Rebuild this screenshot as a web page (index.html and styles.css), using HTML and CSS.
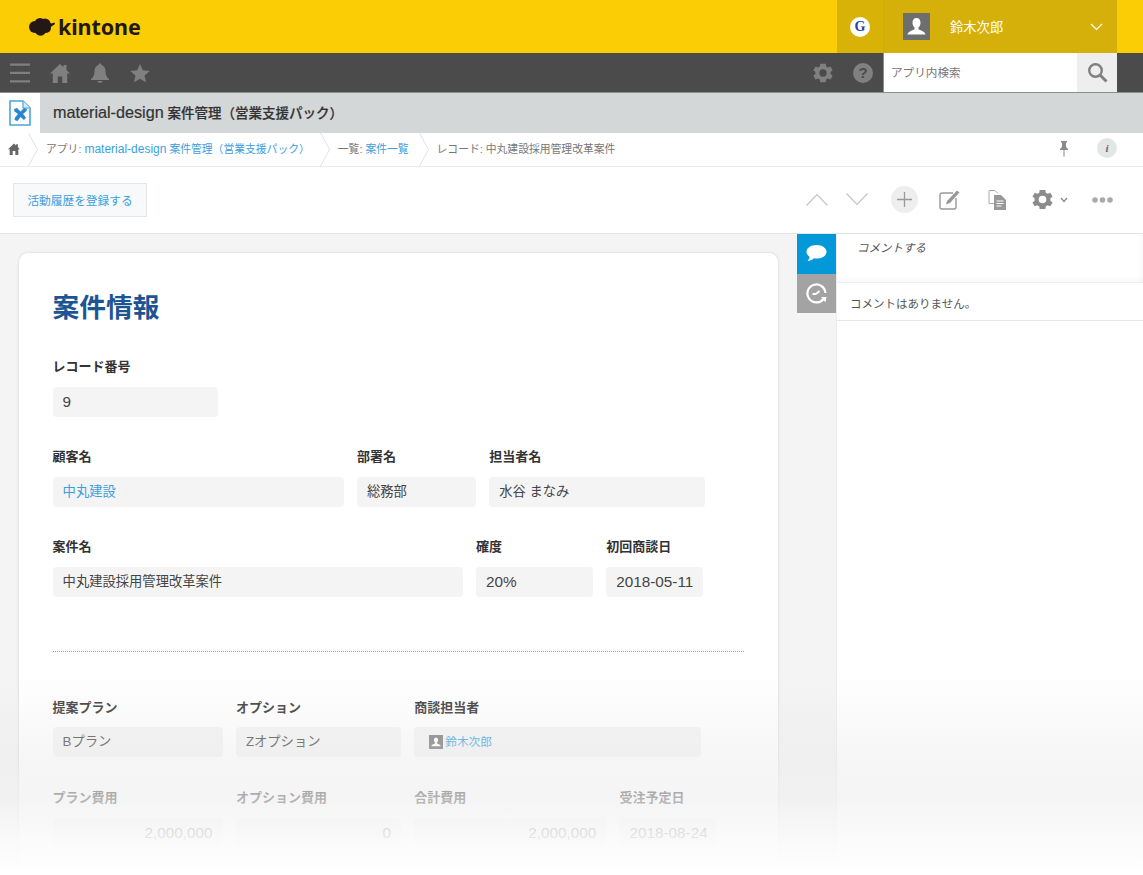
FILE: index.html
```html
<!DOCTYPE html>
<html lang="ja">
<head>
<meta charset="utf-8">
<title>kintone</title>
<link rel="stylesheet" href="styles.css">
</head>
<body>
<div class="page">
<header class="topbar">
  <div class="logo">
    <svg class="logo-mark" width="26" height="19" viewBox="0 0 26 19"><g fill="#231815"><circle cx="6" cy="10" r="6"/><circle cx="11" cy="6.500" r="5.500"/><circle cx="16" cy="7" r="5.500"/><circle cx="11.500" cy="13" r="5.800"/><circle cx="17" cy="11" r="5"/><path d="M19 5l3.500 1.500 3-1L26 7l-3.500 2.500-3 .5z"/></g></svg>
    <span class="logo-text">kintone</span>
  </div>
  <div class="top-right">
    <div class="guest"><span class="g-circle">G</span></div>
    <div class="user">
      <span class="avatar"><svg width="27" height="27" viewBox="0 0 27 27"><rect width="27" height="27" fill="#6e6e6e"/><path d="M13.500 5C16 5 17.500 7 17.500 9.800 17.500 12 16.500 13.600 15.500 14.600V16C15.500 17 22 18 22.500 21.500H4.500C5 18 11.500 17 11.500 16V14.600C10.500 13.600 9.500 12 9.500 9.800 9.500 7 11 5 13.500 5Z" fill="#fff"/></svg></span>
      <span class="user-name">鈴木次郎</span>
      <svg class="user-caret" width="13" height="8" viewBox="0 0 13 8"><path d="M1 1l5.500 5.500L12 1" fill="none" stroke="#fff" stroke-width="1.200"/></svg>
    </div>
  </div>
</header>
<nav class="navbar">
  <div class="nav-left">
    <svg width="20" height="20" viewBox="0 0 20 20"><path d="M0 .5h20v2.300H0zM0 8.800h20v2.300H0zM0 17.200h20v2.300H0z" fill="#808080"/></svg>
    <svg width="20" height="20" viewBox="0 0 20 20"><path d="M10 1L0 10.500h2.800V20h5V13.500h4.400V20h5V10.500H20L16.500 7V2h-3v2.200z" fill="#808080"/></svg>
    <svg width="20" height="20" viewBox="0 0 20 20"><path d="M10 0.500c1 0 1.500.7 1.500 1.500C14.500 2.800 15.500 5.500 15.500 8.500c0 3.500 1 5.500 3.500 7.500v1H1v-1c2.500-2 3.500-4 3.500-7.500C4.500 5.500 5.500 2.800 8.500 2 8.500 1.200 9 .5 10 .5zM7.500 18h5c0 1-1.200 1.800-2.500 1.800S7.500 19 7.500 18z" fill="#808080"/></svg>
    <svg width="20" height="20" viewBox="0 0 20 20"><path d="M10 1l2.800 6.300 6.900.7-5.200 4.500 1.500 6.800L10 15.800l-6 3.500 1.500-6.800L.3 8l6.900-.7z" fill="#808080"/></svg>
  </div>
  <div class="nav-right">
    <svg class="nav-gear" width="22" height="22" viewBox="0 0 24 24"><path d="M20.200 13.200c.1-.4.100-.8.100-1.200s0-.8-.1-1.200l2.300-1.800-2.300-4-2.800 1.100c-.6-.5-1.300-.9-2-1.200L15 2h-6l-.4 2.900c-.7.300-1.400.7-2 1.200L3.800 5l-2.300 4 2.300 1.800c-.1.400-.1.800-.1 1.200s0 .8.100 1.200L1.500 15l2.300 4 2.800-1.100c.6.500 1.300.9 2 1.200L9 22h6l.4-2.900c.7-.3 1.400-.7 2-1.200l2.800 1.100 2.300-4zM12 16a4 4 0 1 1 0-8 4 4 0 0 1 0 8z" fill="#808080"/></svg>
    <span class="help">?</span>
    <div class="search">
      <span class="search-text">アプリ内検索</span>
      <span class="search-btn"><svg width="21" height="21" viewBox="0 0 21 21"><circle cx="8.500" cy="8.500" r="6.300" fill="none" stroke="#808080" stroke-width="2.400"/><path d="M13 13l6.500 6.500" stroke="#808080" stroke-width="3"/></svg></span>
    </div>
  </div>
</nav>
<div class="titlebar">
  <div class="app-icon">
    <svg width="22" height="26" viewBox="0 0 22 26"><path d="M1 1h13l7 7v17H1z" fill="#fff" stroke="#4aa5de" stroke-width="1.600"/><path d="M14 1v7h7" fill="#d6ebf8" stroke="#4aa5de" stroke-width="1.200"/><path d="M5 9l3-1 3.500 3.500L15 8l3 1-.5 2-3.500 3 3 3.500L15 20l-3.500-3-3 4-3-1 .5-2.500L9 14 5.500 11.500z" fill="#2a86cf"/></svg>
  </div>
  <h1 class="app-title"><span class="title-lat">material-design</span> 案件管理（営業支援パック）</h1>
</div>
<div class="crumbs">
  <svg class="crumb-home" width="12" height="12" viewBox="0 0 20 20"><path d="M10 1L0 10.500h2.800V20h5V13.500h4.400V20h5V10.500H20L16.500 7V2h-3v2.200z" fill="#666"/></svg>
  <svg class="crumb-sep" width="10" height="33" viewBox="0 0 10 33"><path d="M.5 0l9 16.500-9 16.500" fill="none" stroke="#dfe3e3"/></svg>
  <span class="crumb">アプリ: <a class="link"><span class="crumb-lat">material-design</span> 案件管理（営業支援パック）</a></span>
  <svg class="crumb-sep" width="10" height="33" viewBox="0 0 10 33"><path d="M.5 0l9 16.500-9 16.500" fill="none" stroke="#dfe3e3"/></svg>
  <span class="crumb">一覧: <a class="link">案件一覧</a></span>
  <svg class="crumb-sep" width="10" height="33" viewBox="0 0 10 33"><path d="M.5 0l9 16.500-9 16.500" fill="none" stroke="#dfe3e3"/></svg>
  <span class="crumb">レコード: 中丸建設採用管理改革案件</span>
  <div class="crumb-right">
    <svg width="10" height="17" viewBox="0 0 10 17"><path d="M2 1h6v1.500H7V7l2 2v1H5.500v6.500h-1V10H1V9l2-2V2.500H2z" fill="#8a8a8a"/></svg>
    <span class="info">i</span>
  </div>
</div>
<div class="toolbar">
  <button class="action-btn">活動履歴を登録する</button>
  <div class="tools">
    <svg class="t-up" width="22" height="13" viewBox="0 0 22 13"><path d="M.5 12.500L11 1.500l10.500 11" fill="none" stroke="#c4c4c4" stroke-width="1.200"/></svg>
    <svg class="t-down" width="22" height="13" viewBox="0 0 22 13"><path d="M.5.500L11 11.500 21.500.500" fill="none" stroke="#c4c4c4" stroke-width="1.200"/></svg>
    <span class="t-plus"><svg width="15" height="15" viewBox="0 0 15 15"><path d="M7.500 0v15M0 7.500h15" stroke="#999" stroke-width="1.300"/></svg></span>
    <svg class="t-edit" width="21" height="20" viewBox="0 0 21 20"><path d="M14 3H3a2 2 0 0 0-2 2v12a2 2 0 0 0 2 2h12a2 2 0 0 0 2-2V8" fill="none" stroke="#999" stroke-width="1.400"/><path d="M18 .5l2.500 2L11 13l-4 1.500L8 11z" fill="#999"/></svg>
    <svg class="t-copy" width="18" height="20" viewBox="0 0 18 20"><path d="M7 .5H1v13h5" fill="none" stroke="#aaa" stroke-width="1"/><path d="M7 .5l3 3" stroke="#aaa"/><path d="M6 5h7l5 5v10H6z" fill="#999"/><path d="M8.500 11h7M8.500 13.500h7M8.500 16h5" stroke="#fff" stroke-width="1"/></svg>
    <span class="t-gear">
      <svg width="23" height="23" viewBox="0 0 24 24"><path d="M20.200 13.200c.1-.4.100-.8.100-1.200s0-.8-.1-1.200l2.300-1.800-2.300-4-2.800 1.100c-.6-.5-1.300-.9-2-1.200L15 2h-6l-.4 2.900c-.7.300-1.400.7-2 1.200L3.800 5l-2.300 4 2.300 1.800c-.1.400-.1.800-.1 1.200s0 .8.100 1.200L1.500 15l2.300 4 2.800-1.100c.6.500 1.300.9 2 1.200L9 22h6l.4-2.900c.7-.3 1.400-.7 2-1.200l2.800 1.100 2.300-4zM12 16a4 4 0 1 1 0-8 4 4 0 0 1 0 8z" fill="#8c8c8c"/></svg>
      <svg width="8" height="6" viewBox="0 0 8 6"><path d="M1 1l3 3.500L7 1" fill="none" stroke="#888" stroke-width="1.200"/></svg>
    </span>
    <svg class="t-more" width="21" height="6" viewBox="0 0 21 6"><circle cx="3" cy="3" r="2.800" fill="#aaa"/><circle cx="10.500" cy="3" r="2.800" fill="#aaa"/><circle cx="18" cy="3" r="2.800" fill="#aaa"/></svg>
  </div>
</div>
<div class="content">
  <main class="main">
    <section class="card">
      <h2 class="section-title">案件情報</h2>
      <div class="row">
        <div class="field w165"><div class="label">レコード番号</div><div class="value value-lat">9</div></div>
      </div>
      <div class="row">
        <div class="field w291"><div class="label">顧客名</div><div class="value"><a class="link">中丸建設</a></div></div>
        <div class="field w119"><div class="label">部署名</div><div class="value">総務部</div></div>
        <div class="field w216"><div class="label">担当者名</div><div class="value">水谷 まなみ</div></div>
      </div>
      <div class="row">
        <div class="field w410"><div class="label">案件名</div><div class="value">中丸建設採用管理改革案件</div></div>
        <div class="field w117"><div class="label">確度</div><div class="value value-lat">20%</div></div>
        <div class="field w97"><div class="label">初回商談日</div><div class="value value-lat">2018-05-11</div></div>
      </div>
      <hr class="divider">
      <div class="row row-wide">
        <div class="field w170"><div class="label">提案プラン</div><div class="value">Bプラン</div></div>
        <div class="field w165"><div class="label">オプション</div><div class="value">Zオプション</div></div>
        <div class="field w287"><div class="label">商談担当者</div><div class="value value-user"><svg class="mini-avatar" width="14" height="14" viewBox="0 0 27 27"><rect width="27" height="27" fill="#777"/><path d="M13.500 5C16 5 17.500 7 17.500 9.800 17.500 12 16.500 13.600 15.500 14.600V16C15.500 17 22 18 22.500 21.500H4.500C5 18 11.500 17 11.500 16V14.600C10.500 13.600 9.500 12 9.500 9.800 9.500 7 11 5 13.500 5Z" fill="#fff"/></svg><a class="link link-small">鈴木次郎</a></div></div>
      </div>
      <div class="row">
        <div class="field w170"><div class="label">プラン費用</div><div class="value value-lat num">2,000,000</div></div>
        <div class="field w165"><div class="label">オプション費用</div><div class="value value-lat num">0</div></div>
        <div class="field w192"><div class="label">合計費用</div><div class="value value-lat num">2,000,000</div></div>
        <div class="field w97"><div class="label">受注予定日</div><div class="value value-lat">2018-08-24</div></div>
      </div>
    </section>
  </main>
  <div class="tabs">
    <span class="tab tab-on"><svg width="21" height="17" viewBox="0 0 21 17"><path d="M10.500 0C16 0 20.500 2.800 20.500 6.800s-4.500 6.800-10 6.800c-1 0-1.900-.1-2.800-.3C6.500 15 3.500 16 1.500 16c1.200-1 2-2.500 2.100-4.200C1.700 10.500.5 8.800.5 6.800.5 2.800 5 0 10.500 0z" fill="#fff"/></svg></span>
    <span class="tab tab-off"><svg width="21" height="21" viewBox="0 0 21 21"><path d="M17.500 16A9 9 0 1 1 19.400 10" fill="none" stroke="#fff" stroke-width="2.200"/><path d="M10 11l3.500-3" stroke="#fff" stroke-width="2"/><path d="M10 11H6.500" stroke="#fff" stroke-width="2"/><path d="M15 14h5.500l-1 5.500z" fill="#fff"/></svg></span>
  </div>
  <aside class="side">
    <div class="comment-box">コメントする</div>
    <div class="no-comment">コメントはありません。</div>
  </aside>
  <div class="fade"></div>
</div>
</div>
</body>
</html>
```
FILE: styles.css
```css
* { box-sizing: border-box; }
html, body { margin: 0; padding: 0; height: 100%; overflow: hidden; }
body {
  font-family: "Liberation Sans", "Noto Sans CJK JP", sans-serif;
  color: #333;
  background: #fff;
}
.page { display: flex; flex-direction: column; height: 875px; width: 1143px; }
.link { color: #3a9fe0; text-decoration: none; }

.topbar {
  flex: 0 0 53px;
  background: #fbcd05;
  display: flex;
  justify-content: space-between;
}
.logo { display: flex; align-items: center; padding-left: 29px; gap: 3px; }
.logo-mark { display: block; margin-top: -1px; }
.logo-text {
  font-family: "Noto Sans", sans-serif;
  font-weight: 700;
  font-size: 21.5px;
  line-height: 1;
  color: #231815;
  letter-spacing: -0.1px;
}
.top-right { display: flex; margin-right: 26px; background: #d6b00a; }
.guest { width: 46px; display: flex; align-items: center; justify-content: center; background: #d9b208; }
.g-circle {
  width: 20px; height: 20px; border-radius: 50%;
  background: #fff; color: #2540a8;
  font: 700 14px/20px "Liberation Serif", serif;
  text-align: center;
}
.user {
  width: 234px;
  display: flex;
  align-items: center;
  padding-left: 20px;
  background: #d6b00a;
  border-left: 1px solid #d2ad0a;
}
.avatar { display: block; height: 27px; margin-left: -1px; }
.avatar svg { display: block; }
.user-name { color: #fff; font-size: 13.300px; margin-left: 20px; flex: 1; }
.user-caret { margin-right: 14px; }

.navbar {
  flex: 0 0 40px;
  background: #4b4b4b;
  border-bottom: 1px solid #8e8e8e;
  display: flex;
  justify-content: space-between;
}
.nav-left { display: flex; align-items: center; padding-left: 10px; gap: 20px; }
.nav-left svg { display: block; }
.nav-right { display: flex; align-items: center; }
.nav-gear { margin-right: 19px; }
.help {
  width: 20px; height: 20px; border-radius: 50%;
  background: #808080; color: #4b4b4b;
  font: 700 15px/20px "Liberation Sans", sans-serif;
  text-align: center;
  margin-right: 10px;
}
.search {
  width: 260px; height: 39px;
  display: flex;
  background: #fff;
  border-left: 1px solid #8e8e8e;
}
.search::after { content: ""; width: 26px; background: #4b4b4b; }
.search-text { flex: 1; font-size: 11.600px; line-height: 39px; padding-left: 7px; color: #777; }
.search-btn { width: 40px; background: #eee; display: flex; align-items: center; justify-content: center; }

.titlebar { flex: 0 0 40px; min-height: 0; overflow: hidden; display: flex; background: #d3d7d8; }
.app-icon { width: 40px; background: #fff; display: flex; align-items: center; justify-content: center; }
.app-title {
  margin: 0; padding-left: 13px;
  font-size: 13.500px; line-height: 38px; font-weight: 500;
  color: #333;
  -webkit-text-stroke: 0.2px #333;
}
.title-lat { font-size: 16.200px; }

.crumbs {
  flex: 0 0 34px;
  min-height: 0;
  display: flex;
  align-items: center;
  border-bottom: 1px solid #ececec;
  font-size: 10.800px;
  color: #777;
  padding-left: 8px;
}
.crumb-home { margin-right: 8px; margin-bottom: 2px; }
.crumb-sep { display: block; flex: none; }
.crumb { margin: 0 10px 3px 8px; white-space: nowrap; }
.crumb-lat { font-size: 12px; }
.crumb-right { margin-left: auto; display: flex; align-items: center; gap: 28px; padding: 0 26px 3px 0; }
.info {
  width: 20px; height: 20px; border-radius: 50%;
  background: #e3e6e6; color: #666;
  font: italic 700 11px/20px "Liberation Serif", serif;
  text-align: center;
}

.toolbar {
  flex: 0 0 67px;
  display: flex;
  align-items: center;
  justify-content: space-between;
  padding: 0 30px 1px 13px;
  border-bottom: 1px solid #e3e3e3;
}
.action-btn {
  width: 134px; height: 34px; padding: 0;
  background: #f7f9fa;
  border: 1px solid #e3e7e8;
  color: #3a9fe0;
  font-family: inherit;
  font-size: 11.700px;
}
.tools { display: flex; align-items: center; }
.tools > * { flex: none; }
.t-up { margin-right: 18px; }
.t-down { margin-right: 23px; }
.t-plus {
  width: 27px; height: 27px; border-radius: 50%;
  background: #eee;
  display: flex; align-items: center; justify-content: center;
  margin-right: 21px;
}
.t-edit { margin-right: 28px; }
.t-copy { margin-right: 25px; }
.t-gear { display: flex; align-items: center; gap: 6px; margin-right: 24px; }
.t-gear svg { display: block; }

.content { flex: 1; position: relative; display: flex; background: #f4f4f4; min-height: 0; overflow: hidden; }
.main { width: 797px; padding: 18px 0 0 18px; }
.card {
  width: 761px;
  background: #fff;
  border: 1px solid #e6e6e6;
  border-bottom: 0;
  border-radius: 10px 10px 0 0;
  padding: 33px 0 0 33.600px;
  box-shadow: 0 0 3px rgba(0,0,0,.05);
  height: 700px;
}
.section-title {
  margin: 0 0 28px;
  font-size: 26.700px; line-height: 44px; font-weight: 700;
  color: #1d5594;
}
.row { display: flex; gap: 13.300px; margin-bottom: 31px; }
.row-wide { margin-bottom: 32px; }
.row-wide .label { margin-bottom: 9px; }
.field { flex: none; }
.label { font-size: 13px; font-weight: 700; line-height: 20px; color: #333; margin-bottom: 10px; margin-top: -1px; }
.value {
  height: 30px;
  background: #f4f4f4;
  border-radius: 4px;
  padding: 0 10px;
  font-size: 13.300px; line-height: 30px;
  color: #444;
  white-space: nowrap;
}
.value-lat { font-size: 15.300px; }
.num { text-align: right; }
.value-user { display: flex; align-items: center; padding-left: 15px; }
.mini-avatar { flex: none; margin-right: 2px; }
.link-small { font-size: 11.700px; }
.w97 { width: 97px; }
.w117 { width: 117px; }
.w119 { width: 119px; }
.w165 { width: 165px; }
.w170 { width: 170px; }
.w192 { width: 192px; }
.w216 { width: 216px; }
.w287 { width: 287px; }
.w291 { width: 291px; }
.w410 { width: 410px; }
.divider {
  width: 691px;
  margin: 54px 0 47px;
  border: 0;
  border-top: 1px dotted #999;
}

.tabs { width: 39px; display: flex; flex-direction: column; }
.tab { height: 39.500px; display: flex; align-items: center; justify-content: center; }
.tab-on { background: #0399d8; }
.tab-off { background: #a3a3a3; }
.side { flex: 1; background: #fff; border-left: 1px solid #ececec; }
.comment-box {
  height: 49px;
  padding: 6px 0 0 20px;
  font-size: 11.500px; line-height: 16px;
  color: #555;
  font-style: italic;
  border-bottom: 1px solid #eee;
  box-shadow: inset 0 -6px 8px -6px rgba(0,0,0,.05), inset -6px 0 8px -6px rgba(0,0,0,.05);
}
.no-comment {
  height: 38px;
  padding-left: 13px;
  font-size: 11.500px; line-height: 42px;
  color: #555;
  border-bottom: 1px solid #e8e8e8;
}
.fade {
  position: absolute;
  left: 0; right: 0; bottom: 0;
  height: 205px;
  background: linear-gradient(to bottom,
    rgba(235,235,235,0),
    rgba(232,232,232,.4) 44%,
    rgba(240,240,240,.68) 63%,
    rgba(250,250,250,.9) 83%,
    #fff);
  pointer-events: none;
}
```
